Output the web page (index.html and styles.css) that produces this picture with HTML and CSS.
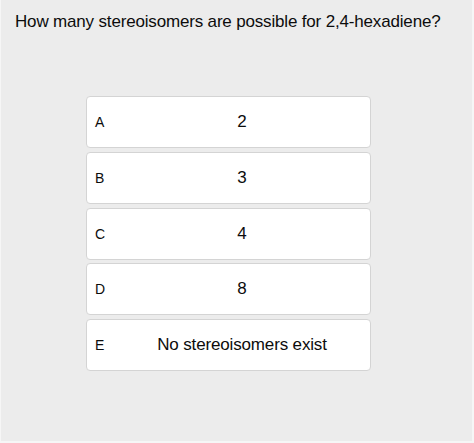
FILE: index.html
```html
<!DOCTYPE html>
<html>
<head>
<meta charset="utf-8">
<link rel="stylesheet" href="styles.css">
</head>
<body>
<div class="page">
  <h1 class="question">How many stereoisomers are possible for 2,4-hexadiene?</h1>
  <div class="options">
    <div class="option"><span class="label">A</span><span class="value">2</span></div>
    <div class="option"><span class="label">B</span><span class="value">3</span></div>
    <div class="option"><span class="label">C</span><span class="value">4</span></div>
    <div class="option"><span class="label">D</span><span class="value">8</span></div>
    <div class="option"><span class="label">E</span><span class="value">No stereoisomers exist</span></div>
  </div>
</div>
</body>
</html>
```
FILE: styles.css
```css
html, body {
  margin: 0;
  padding: 0;
  background: #f6f6f6;
}
.page {
  box-sizing: border-box;
  width: 471px;
  height: 441px;
  margin-left: 1px;
  background: #ececec;
  font-family: "Liberation Sans", Arial, sans-serif;
  color: #0c0c0c;
  padding: 11px 0 0 14px;
}
.question {
  margin: 0;
  font-size: 17px;
  letter-spacing: -0.17px;
  font-weight: normal;
  line-height: 22px;
}
.options {
  display: flex;
  flex-direction: column;
  gap: 3.75px;
  width: 285px;
  margin: 63px 0 0 71px;
}
.option {
  box-sizing: border-box;
  height: 52px;
  display: flex;
  align-items: center;
  background: #fff;
  border: 1px solid #d4d4d4;
  border-radius: 4px;
  padding: 0 8px;
}
.label {
  width: 27px;
  font-size: 14px;
}
.value {
  flex: 1;
  text-align: center;
  font-size: 17px;
  letter-spacing: -0.15px;
}
```
